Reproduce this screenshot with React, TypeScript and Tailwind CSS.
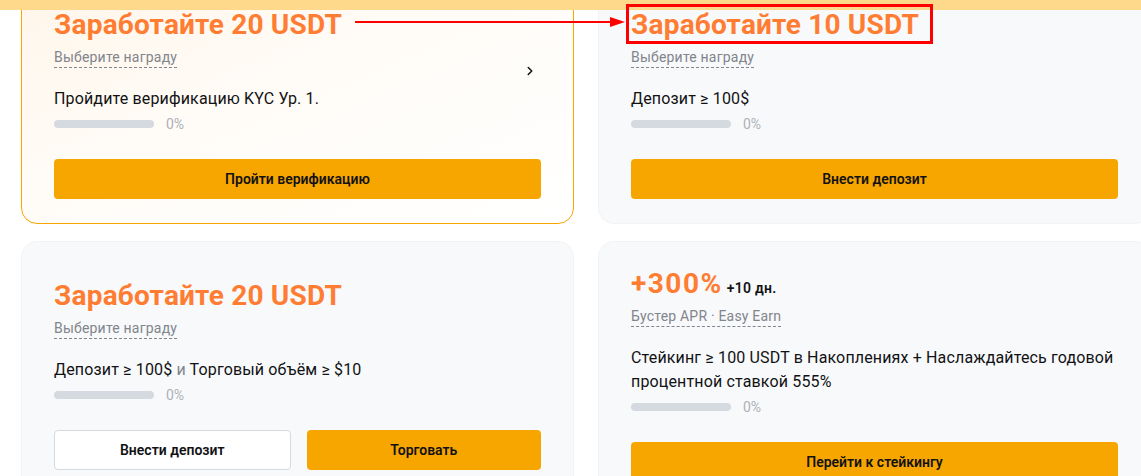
import React from "react";
import { ChevronRight } from "lucide-react";

type Task = {
    title: React.ReactNode;
    subtitle: string;
    desc: React.ReactNode;
    buttons: { label: string; outline?: boolean }[];
    highlight?: boolean;
    chevron?: boolean;
};

const tasks: Task[] = [
    {
        title: "Заработайте 20 USDT",
        subtitle: "Выберите награду",
        desc: "Пройдите верификацию KYC Ур. 1.",
        buttons: [{ label: "Пройти верификацию" }],
        highlight: true,
        chevron: true,
    },
    {
        title: "Заработайте 10 USDT",
        subtitle: "Выберите награду",
        desc: "Депозит ≥ 100$",
        buttons: [{ label: "Внести депозит" }],
    },
    {
        title: "Заработайте 20 USDT",
        subtitle: "Выберите награду",
        desc: (
            <>
                Депозит ≥ 100$ <span className="text-[#81858c]">и</span> Торговый объём ≥ $10
            </>
        ),
        buttons: [{ label: "Внести депозит", outline: true }, { label: "Торговать" }],
    },
    {
        title: (
            <>
                <span className="tracking-[1.5px]">+300%</span>
                <span className="text-[14px] font-semibold tracking-[0.3px] text-[#121214]">+10 дн.</span>
            </>
        ),
        subtitle: "Бустер APR · Easy Earn",
        desc: "Стейкинг ≥ 100 USDT в Накоплениях + Наслаждайтесь годовой процентной ставкой 555%",
        buttons: [{ label: "Перейти к стейкингу" }],
    },
];

function TaskCard({ task }: { task: Task }) {
    return (
        <div
            className={`relative flex flex-col justify-center rounded-[16px] border px-[32px] py-[24px] ${
                task.highlight
                    ? "border-[#f7a600] bg-gradient-to-br from-[#fff6ea] via-[#fffcf8] to-white"
                    : "border-[#f2f3f5] bg-[#f8f9fb]"
            }`}
        >
            <div className="flex h-[36px] items-baseline gap-[4px] text-[28px] font-bold leading-[36px] tracking-[0.2px] text-[#ff7d32]">
                {task.title}
            </div>
            <div className="mt-[2px]">
                <span className="inline-block border-b border-dashed border-[#81858c] text-[14px] leading-[20px] tracking-[0.2px] text-[#81858c]">
                    {task.subtitle}
                </span>
            </div>
            <p className="mt-[18px] text-[16px] leading-[24px] tracking-[0.15px] text-[#121214]">{task.desc}</p>
            <div className="mt-[3px] flex h-[20px] items-center gap-[12px]">
                <div className="h-[8px] w-[100px] rounded-full bg-[#d5d9e0]" />
                <span className="text-[14px] text-[#adb1b8]">0%</span>
            </div>
            <div className="mt-[25px] flex gap-[16px]">
                {task.buttons.map((b) => (
                    <button
                        key={b.label}
                        className={`h-[40px] flex-1 rounded-[4px] text-[14px] font-semibold text-[#121214] ${
                            b.outline ? "border border-[#d5d9e0] bg-white" : "bg-[#f7a600]"
                        }`}
                    >
                        {b.label}
                    </button>
                ))}
            </div>
            {task.chevron && (
                <ChevronRight
                    className="absolute right-[36px] top-[81px] text-[#121214]"
                    size={14}
                    strokeWidth={2.6}
                />
            )}
        </div>
    );
}

export default function App() {
    return (
        <div
            className="relative h-[476px] w-[1141px] overflow-hidden bg-white"
            style={{ fontFamily: "Roboto, 'Noto Sans', sans-serif" }}
        >
            <div className="-mt-[18px] grid grid-cols-[553px_553px] gap-x-[24px] gap-y-[17px] pl-[21px]">
                {tasks.map((t, i) => (
                    <TaskCard key={i} task={t} />
                ))}
            </div>

            {/* sticky header edge */}
            <div className="absolute left-0 top-0 h-[10px] w-full bg-[#fed98b]" />

            {/* annotation */}
            <div className="absolute left-[355px] top-[21px] h-[2px] w-[258px] bg-[#ff0000]" />
            <svg className="absolute left-[610px] top-[17px]" width="15" height="10" viewBox="0 0 15 10">
                <polygon points="0,0 15,5 0,10" fill="#ff0000" />
            </svg>
            <div className="absolute left-[626px] top-[4px] h-[40px] w-[307px] border-[3px] border-[#ff0000]" />
        </div>
    );
}
